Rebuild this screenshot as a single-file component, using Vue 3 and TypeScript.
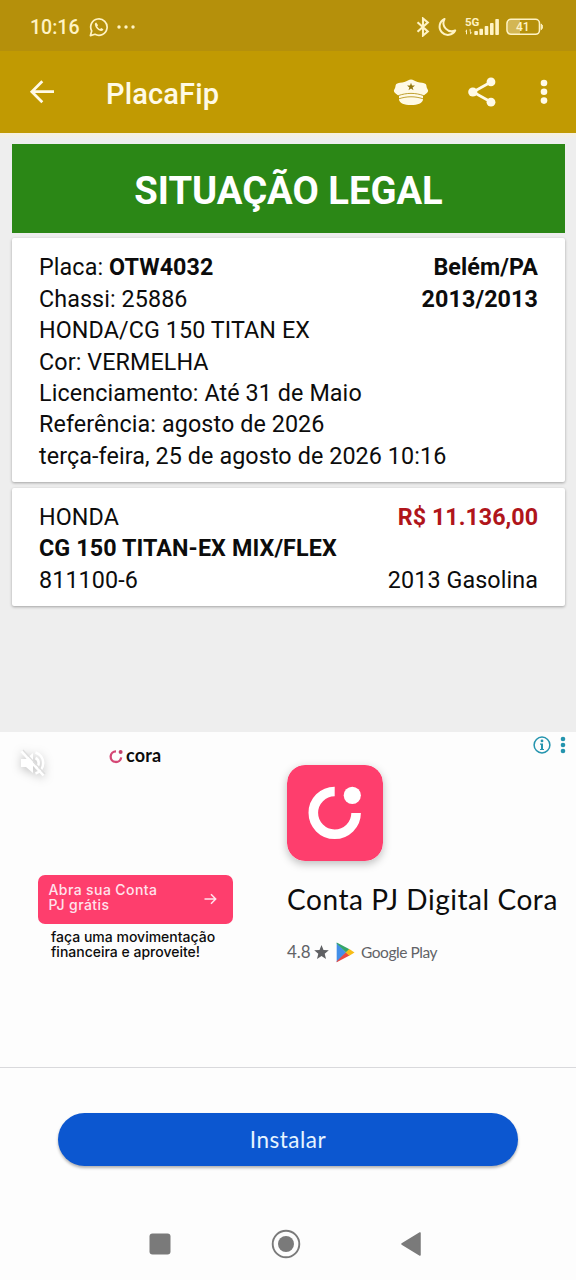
<script setup lang="ts">
interface Row {
  label: string
  strong?: string
  right?: string
}

const vehicle: Row[] = [
  { label: 'Placa: ', strong: 'OTW4032', right: 'Belém/PA' },
  { label: 'Chassi: 25886', right: '2013/2013' },
  { label: 'HONDA/CG 150 TITAN EX' },
  { label: 'Cor: VERMELHA' },
  { label: 'Licenciamento: Até 31 de Maio' },
  { label: 'Referência: agosto de 2026' },
  { label: 'terça-feira, 25 de agosto de 2026 10:16' },
]
</script>

<template>
  <div class="screen">
    <div class="status">
      <span class="clock">10:16</span>
      <svg class="whatsapp" width="20" height="20" viewBox="0 0 20 20">
        <path d="M1.400 18.600 2.700 14A8.200 8.200 0 1 1 6 17.300Z" fill="none" stroke="#fff3c4" stroke-width="1.700" stroke-linejoin="round" />
        <path d="M7.200 5.400c-.9.3-1.500 1.200-1.300 2.300.5 3 3 5.600 6 6.300 1.300.2 2.300-.6 2.500-1.700l-2.200-1.300-1.100 1.100c-1.300-.6-2.300-1.600-2.900-2.900l.9-1Z" fill="#fff3c4" />
      </svg>
      <svg class="more" width="18" height="4" viewBox="0 0 18 4" fill="#fff3c4">
        <circle cx="2" cy="2" r="1.700" /><circle cx="9" cy="2" r="1.700" /><circle cx="16" cy="2" r="1.700" />
      </svg>
      <svg class="bluetooth" width="14" height="20" viewBox="0 0 14 20" fill="none" stroke="#fff3c4" stroke-width="2.100">
        <path d="M1.500 5.200 11.800 14.500 7 18.500V1.500l4.800 4L1.500 14.800" />
      </svg>
      <svg class="moon" width="20" height="20" viewBox="0 0 20 20" fill="none" stroke="#fff3c4" stroke-width="2" stroke-linejoin="round">
        <path d="M7.500 2A8.300 8.300 0 1 0 18.200 13.500A8.300 8.300 0 0 1 7.500 2Z" />
      </svg>
      <svg class="signal" width="36" height="30" viewBox="0 -5 36 30" fill="#fff3c4">
        <text x="0" y="8.800" class="net">5G</text>
        <path d="M0 14.500 2 12.300v5H1v-2.800ZM4.500 12.300h1.200v3l1.300.2-1.700 2.100Z" />
        <rect x="9.300" y="14" width="3.600" height="4" rx=".8" />
        <rect x="14.400" y="11.800" width="3.600" height="6.200" rx=".8" />
        <rect x="19.700" y="9" width="3.600" height="9" rx=".8" />
        <rect x="25" y="6" width="3.600" height="12" rx=".8" />
        <rect x="30.300" y="2" width="3.600" height="16" rx=".8" />
      </svg>
      <svg class="battery" width="38" height="18" viewBox="0 0 38 18">
        <path d="M5 2h9v14H5a3 3 0 0 1-3-3V5a3 3 0 0 1 3-3Z" fill="#d3b654" />
        <rect x="1" y="1.300" width="32.500" height="15" rx="4" fill="none" stroke="#fff3c4" stroke-width="1.600" />
        <path d="M35.200 6c1.700.3 1.700 5.300 0 5.600Z" fill="#fff3c4" stroke="#fff3c4" />
        <text x="16.800" y="13.200" class="charge">41</text>
      </svg>
    </div>

    <header class="appbar">
      <svg class="back" width="26" height="26" viewBox="0 0 26 26" fill="none" stroke="#fffae6" stroke-width="2.700">
        <path d="M25 12.700H3M13.300 2.200 2.800 12.700l10.500 10.500" />
      </svg>
      <h1>PlacaFip</h1>
      <svg class="cap" width="36" height="28" viewBox="0 0 36 28">
        <path d="M18 1.500c2 0 4 1.600 6.500 2.600 3 1 6.400.4 8.200 2 1.200 1.300.3 3 2 5.400 1.300 2-.6 4-4.700 6.200v4c-.8 3.500-5 5.300-12 5.300s-11.200-1.800-12-5.300v-4C1.900 15.500 0 13.500 1.300 11.500c1.700-2.400.8-4.100 2-5.400 1.800-1.600 5.200-1 8.200-2C14 3.100 16 1.500 18 1.500Z" fill="#fffae6" />
        <path d="M5.200 17.700c8.300-3.100 17.300-3.100 25.600 0M5.900 20.800c8-2.700 16.200-2.700 24.200 0" fill="none" stroke="#b8961c" stroke-width=".9" />
        <path d="m18 4.700 1 2.900h3l-2.400 1.800.9 2.900-2.500-1.800-2.500 1.800.9-2.900L14 7.600h3Z" fill="#94770c" />
      </svg>
      <svg class="share" width="30" height="30" viewBox="0 0 30 30" fill="#fffae6">
        <path d="M24 5 6 15l18 10" fill="none" stroke="#fffae6" stroke-width="2.700" />
        <circle cx="24" cy="4.900" r="4.400" /><circle cx="5.800" cy="15" r="4.600" /><circle cx="24" cy="25.200" r="4.400" />
      </svg>
      <svg class="kebab" width="8" height="26" viewBox="0 0 8 26" fill="#fffae6">
        <circle cx="4" cy="4" r="3.300" /><circle cx="4" cy="12.800" r="3.300" /><circle cx="4" cy="21.600" r="3.300" />
      </svg>
    </header>

    <main class="content">
      <div class="banner"><span>SITUAÇÃO LEGAL</span></div>
      <section class="card vehicle">
        <div v-for="row in vehicle" :key="row.label" class="row">
          <span>{{ row.label }}<b v-if="row.strong">{{ row.strong }}</b></span>
          <b v-if="row.right">{{ row.right }}</b>
        </div>
      </section>
      <section class="card price">
        <div class="row"><span>HONDA</span><b class="value">R$ 11.136,00</b></div>
        <div class="row"><b class="model">CG 150 TITAN-EX MIX/FLEX</b></div>
        <div class="row"><span>811100-6</span><span>2013 Gasolina</span></div>
      </section>
    </main>

    <section class="ad">
      <div class="creative">
        <div class="top">
          <svg class="mute" width="30" height="30" viewBox="0 0 30 30">
            <path d="M3 11h5l7-6v20l-7-6H3Z" fill="#fff" />
            <path d="M17.500 10a5.500 5.500 0 0 1 0 10M17.500 4.500a11 11 0 0 1 0 21" fill="none" stroke="#fff" stroke-width="2.500" />
            <path d="m5 2 22 24" stroke="#dedede" stroke-width="1.300" />
            <path d="m3.500 3.500 22 24" stroke="#fff" stroke-width="2.400" />
          </svg>
          <svg class="mark" width="15" height="15" viewBox="0 0 15 15">
            <path d="M7 2.400A5.300 5.300 0 1 0 12.200 8.400" fill="none" stroke="#d54775" stroke-width="2.300" />
            <circle cx="11.600" cy="2.900" r="2" fill="#c2436c" />
          </svg>
          <span class="brand">cora</span>
        </div>
        <div class="offer">
          <span>Abra sua Conta<br />PJ grátis</span>
          <svg width="13" height="12" viewBox="0 0 13 12" fill="none" stroke="#ffe3ec" stroke-width="1.500">
            <path d="M.5 6h11M7 1.200 11.700 6 7 10.800" />
          </svg>
        </div>
        <p class="note">faça uma movimentação<br /><span>financeira e aproveite!</span></p>
      </div>
      <div class="details">
        <div class="choices">
          <svg width="18" height="18" viewBox="0 0 18 18">
            <circle cx="9" cy="9" r="7.900" fill="none" stroke="#2494ae" stroke-width="1.500" />
            <circle cx="9" cy="4.900" r="1.400" fill="#2494ae" />
            <path d="M7 7.500h3v5.400h1v1.200H7v-1.200h1V8.700H7Z" fill="#2494ae" />
          </svg>
          <svg width="6" height="18" viewBox="0 0 6 18" fill="#2494ae">
            <circle cx="3" cy="3" r="2.300" /><circle cx="3" cy="9" r="2.300" /><circle cx="3" cy="15" r="2.300" />
          </svg>
        </div>
        <svg class="logo" width="96" height="96" viewBox="0 0 96 96">
          <rect width="96" height="96" rx="18" fill="#fe3e6d" />
          <path d="M47.700 26.500A21.400 21.400 0 1 0 69.100 48" fill="none" stroke="#fff" stroke-width="9.600" />
          <circle cx="65.300" cy="30.300" r="8.600" fill="#fff" />
        </svg>
        <h2>Conta PJ Digital Cora</h2>
        <div class="rating">
          <span class="score">4.8</span>
          <svg class="star" width="15" height="14" viewBox="0 0 15 14"><path d="m7.500 0 2 4.900 5.300.4-4.100 3.400 1.300 5.200-4.500-2.800L3 13.900l1.300-5.200L.2 5.300l5.300-.4Z" fill="#5f6063" /></svg>
          <svg class="play" width="19" height="21" viewBox="0 0 19 21">
            <path d="M.7.7 10 10.400.7 20.200Z" fill="#438fe8" />
            <path d="M.7.5 13.500 7.200 10 10.600.7 1.500Z" fill="#35a568" />
            <path d="m.7 20.300 12.800-6.800L10 10.200.7 19.300Z" fill="#e94a42" />
            <path d="m13.300 7 5.200 3.400-5.200 3.400-3.600-3.400Z" fill="#f7bc16" />
          </svg>
          <span class="store">Google Play</span>
        </div>
      </div>
    </section>

    <section class="action"><button type="button"><span>Instalar</span></button></section>

    <nav class="nav">
      <svg width="22" height="30" viewBox="0 0 22 30"><rect x=".5" y="4.500" width="21" height="21" rx="3" fill="#7a7a7a" /></svg>
      <svg width="30" height="30" viewBox="0 0 30 30"><circle cx="15" cy="15" r="13.300" fill="none" stroke="#7a7a7a" stroke-width="1.900" /><circle cx="15" cy="15" r="8" fill="#7a7a7a" /></svg>
      <svg width="20" height="30" viewBox="0 0 20 30"><path d="M19 4v22L1 15Z" fill="#7a7a7a" stroke="#7a7a7a" stroke-width="1.500" stroke-linejoin="round" /></svg>
    </nav>
  </div>
</template>

<style>
body { margin: 0; background: #fdfdfd; }
</style>

<style scoped>
.screen { width: 576px; height: 1280px; overflow: hidden; display: flex; flex-direction: column; background: #fdfdfd; font-family: Roboto, "Liberation Sans", sans-serif; color: #0c0c0c; }
svg { display: block; flex: none; }
span, b, h1, h2 { white-space: nowrap; }
.status { height: 51px; flex: none; box-sizing: border-box; padding: 3px 32px 0 30px; display: flex; align-items: center; background: #b5900b; color: #fff3c4; }
.clock { width: 59px; font-size: 19.500px; font-weight: 500; margin-top: 1px; }
.more { margin-left: 8px; }
.bluetooth { margin-left: auto; }
.moon { margin-left: 7px; }
.signal { margin-left: 8px; }
.battery { margin-left: 5px; }
.net { font: 700 11.500px Roboto, sans-serif; }
.charge { font: 500 12px Roboto, sans-serif; text-anchor: middle; fill: #fff3c4; }
.appbar { height: 82px; flex: none; box-sizing: border-box; padding: 0 28px 0 29px; display: flex; align-items: center; background: #c19a02; color: #fffae6; }
h1 { margin: 3px 0 0 51px; font-size: 29px; line-height: 34px; font-weight: 500; letter-spacing: .15px; }
.cap { margin-left: auto; }
.share { margin-left: 38px; }
.kebab { margin-left: 43px; }
.content { height: 599px; flex: none; box-sizing: border-box; padding: 11px 11px 0 12px; background: linear-gradient(#f7f0dd, #eeeeee 6px); display: flex; flex-direction: column; }
.banner { height: 89px; display: flex; align-items: center; justify-content: center; background: #2b8716; color: #fff; font-size: 38.200px; font-weight: 700; padding-top: 4px; box-sizing: border-box; }
.card { box-sizing: border-box; background: #fff; border-radius: 2px; box-shadow: 0 1px 3px rgba(0, 0, 0, .32); padding: 0 27px; font-size: 23.300px; letter-spacing: .1px; }
.vehicle { height: 244px; margin-top: 5px; padding-top: 14.200px; }
.price { height: 118px; margin-top: 6px; padding-top: 14px; }
.row { height: 31.450px; line-height: 31.450px; display: flex; justify-content: space-between; }
.value { color: #b0151b; letter-spacing: 0; }
.ad { height: 336px; flex: none; box-sizing: border-box; display: flex; border-bottom: 1px solid #d9d9dc; }
.creative { width: 287px; flex: none; }
.top { height: 143px; display: flex; align-items: flex-start; }
.mute { margin: 16px 0 0 18px; filter: drop-shadow(0 2px 5px rgba(0, 0, 0, .25)); }
.mark { margin: 17px 0 0 61px; }
.brand { margin: 13px 0 0 2px; font: 700 18px/20px Lato, sans-serif; letter-spacing: .2px; }
.offer { width: 195px; height: 49px; box-sizing: border-box; margin-left: 38px; padding: 7px 16px 0 10.500px; border-radius: 7px; background: #fe3e6d; color: #ffe3ec; display: flex; justify-content: space-between; font: 500 14px/15px Inter, sans-serif; letter-spacing: .4px; }
.offer svg { margin-top: 11px; }
.note { margin: 5px 0 0 51px; font: 500 14px/15px Inter, sans-serif; }
.details { flex: 1; }
.choices { height: 33px; box-sizing: border-box; padding: 4px 10px 0 0; display: flex; justify-content: flex-end; gap: 9px; }
.logo { border-radius: 18px; box-shadow: 0 3px 8px rgba(0, 0, 0, .25); }
h2 { margin: 21px 0 0; font: 400 28px/34px Lato, sans-serif; letter-spacing: .55px; }
.rating { height: 24px; margin-top: 24px; display: flex; align-items: center; color: #626367; font: 400 17px/24px Lato, sans-serif; }
.score { width: 27px; }
.play { margin-left: 7px; }
.store { margin-left: 6px; font-size: 15.500px; letter-spacing: -.45px; }
.action { height: 138px; flex: none; padding-top: 45px; box-sizing: border-box; }
button { display: block; width: 460px; height: 53px; margin: 0 auto; padding: 0; border: 0; border-radius: 27px; background: #0c57d0; box-shadow: 0 2px 3px rgba(0, 0, 0, .3); color: #e6f4ff; font: 400 22.500px/53px Lato, sans-serif; letter-spacing: .5px; }
.nav { height: 74px; flex: none; box-sizing: border-box; padding: 23px 155px 0 149px; display: flex; justify-content: space-between; }
</style>
